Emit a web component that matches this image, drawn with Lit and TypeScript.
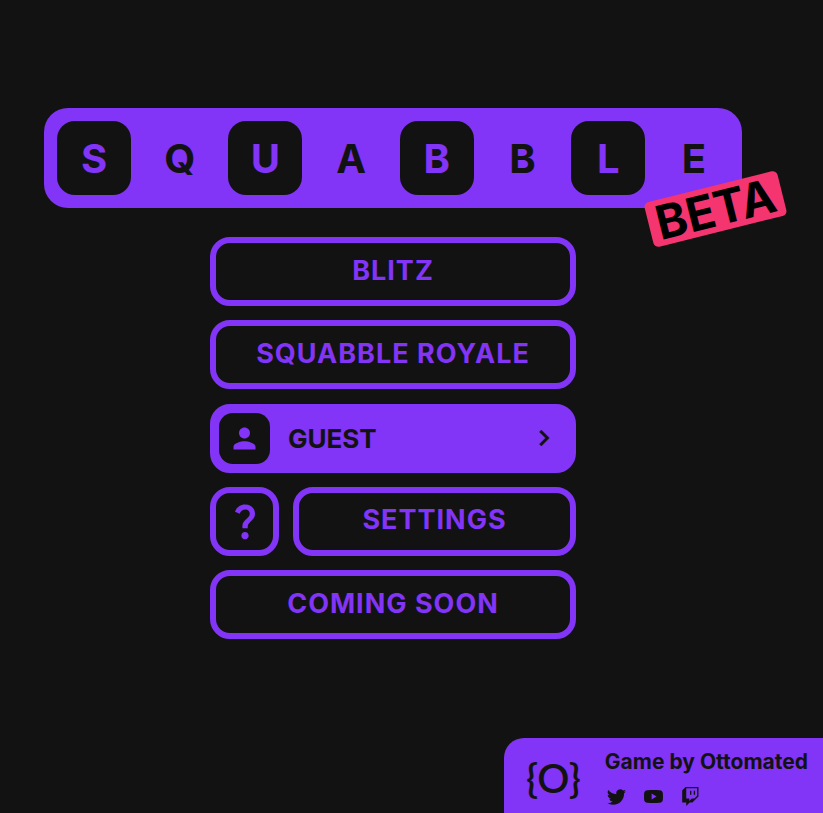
import { LitElement, html, css, svg } from "lit";
import { customElement, property } from "lit/decorators.js";

const icons = {
  person: svg`<path d="M12 12c2.21 0 4-1.79 4-4s-1.79-4-4-4-4 1.79-4 4 1.79 4 4 4zm0 2c-2.67 0-8 1.34-8 4v2h16v-2c0-2.66-5.33-4-8-4z"/>`,
  chevron: svg`<path d="M10 6 8.59 7.41 13.17 12l-4.58 4.59L10 18l6-6z" stroke="currentColor" stroke-width="0.3"/>`,
  help: svg`<path d="M11.07 12.85c.77-1.39 2.25-2.21 3.11-3.44.91-1.29.4-3.7-2.18-3.7-1.69 0-2.52 1.28-2.87 2.34L6.54 6.96C7.25 4.83 9.18 3 11.99 3c2.35 0 3.96 1.07 4.78 2.41.7 1.15 1.11 3.3.03 4.9-1.2 1.77-2.35 2.31-2.97 3.45-.25.46-.35.76-.35 2.24h-2.89c-.01-.78-.13-2.05.48-3.15zM14 20c0 1.1-.9 2-2 2s-2-.9-2-2 .9-2 2-2 2 .9 2 2z"/>`,
  twitter: svg`<path d="M5.026 15c6.038 0 9.341-5.003 9.341-9.334 0-.14 0-.282-.006-.422A6.685 6.685 0 0 0 16 3.542a6.658 6.658 0 0 1-1.889.518 3.301 3.301 0 0 0 1.447-1.817 6.533 6.533 0 0 1-2.087.793A3.286 3.286 0 0 0 7.875 6.03a9.325 9.325 0 0 1-6.767-3.429 3.289 3.289 0 0 0 1.018 4.382A3.323 3.323 0 0 1 .64 6.575v.045a3.288 3.288 0 0 0 2.632 3.218 3.203 3.203 0 0 1-.865.115 3.23 3.23 0 0 1-.614-.057 3.283 3.283 0 0 0 3.067 2.277A6.588 6.588 0 0 1 .78 13.58a6.32 6.32 0 0 1-.78-.045A9.344 9.344 0 0 0 5.026 15z"/>`,
  youtube: svg`<path fill-rule="evenodd" d="M3 2.700C6 2.400 10 2.400 13 2.700 15 2.900 15.800 3.800 15.900 5.500 16 7.200 16 8.800 15.900 10.500 15.800 12.200 15 13.100 13 13.300 10 13.600 6 13.600 3 13.300 1 13.100.2 12.200.1 10.500 0 8.800 0 7.200.1 5.500.2 3.800 1 2.900 3 2.700zM6.400 5.500v5L10.600 8z"/>`,
  twitch: svg`<path d="M3.857 0 1 2.857v10.286h3.429V16l2.857-2.857H9.57L14.714 8V0H3.857zm9.714 7.429-2.285 2.285H9l-2 2v-2H4.429V1.143h9.142v6.286z"/><path d="M11.857 3.143h-1.143V6.57h1.143V3.143zm-3.143 0H7.571V6.57h1.143V3.143z"/>`,
};

@customElement("squabble-logo")
class SquabbleLogo extends LitElement {
  @property() word = "SQUABBLE";

  static styles = css`
    :host {
      display: block;
      position: relative;
    }
    .bar {
      display: flex;
      justify-content: space-between;
      margin: 0;
      padding: 13px 11px 13px 13px;
      border-radius: 24px;
      background: var(--accent);
      color: var(--ground);
      font-size: 40px;
      font-weight: 700;
    }
    .tile {
      display: grid;
      place-items: center;
      width: 74px;
      height: 74px;
      border-radius: 18px;
    }
    .tile:nth-child(odd) {
      background: var(--ground);
      color: var(--accent);
    }
    .badge {
      position: absolute;
      right: -42px;
      top: 78px;
      width: 137px;
      height: 46px;
      border-radius: 5px;
      background: #f4356f;
      color: #000;
      font-size: 47px;
      font-weight: 700;
      line-height: 46px;
      text-align: center;
      transform: rotate(-14deg);
    }
  `;

  render() {
    return html`
      <h1 class="bar">
        ${[...this.word].map((c) => html`<span class="tile">${c}</span>`)}
      </h1>
      <span class="badge">BETA</span>
    `;
  }
}

@customElement("app-root")
class AppRoot extends LitElement {
  static styles = css`
    :host {
      --accent: #8234f7;
      --ground: #121212;
      display: flex;
      flex-direction: column;
      min-height: 100vh;
      background: var(--ground);
      color: var(--accent);
      font-family: Inter, "Open Sans", sans-serif;
    }
    main {
      flex: 1;
      padding: 108px 81px 32px 44px;
    }
    .menu {
      display: flex;
      flex-direction: column;
      justify-content: space-between;
      max-width: 366px;
      min-height: 402px;
      margin: 29px auto 0;
    }
    .row {
      display: flex;
      gap: 14px;
    }
    button {
      box-sizing: border-box;
      height: 69px;
      margin: 0;
      padding: 0 0 3px;
      border: 6px solid var(--accent);
      border-radius: 20px;
      background: var(--ground);
      color: var(--accent);
      font: inherit;
      font-size: 27px;
      font-weight: 700;
      letter-spacing: 1px;
      cursor: pointer;
    }
    svg {
      display: block;
      fill: currentColor;
    }
    .wide {
      flex: 1;
    }
    .square {
      display: grid;
      place-items: center;
      width: 69px;
      padding: 0;
    }
    .guest {
      display: flex;
      align-items: center;
      padding: 0 10px 0 3px;
      background: var(--accent);
      color: var(--ground);
      font-size: 26px;
      letter-spacing: normal;
    }
    .avatar {
      display: grid;
      place-items: center;
      width: 51px;
      height: 51px;
      margin-right: 18px;
      border-radius: 14px;
      background: var(--ground);
      color: var(--accent);
    }
    .name {
      flex: 1;
      text-align: left;
    }
    footer {
      display: flex;
      gap: 24px;
      box-sizing: border-box;
      height: 75px;
      margin-left: auto;
      padding: 11px 15px 0 22px;
      border-radius: 20px 0 0 0;
      background: var(--accent);
      color: var(--ground);
    }
    .mark {
      font-family: Lato, sans-serif;
      font-size: 40px;
      font-weight: 600;
      line-height: 58px;
    }
    .credit {
      margin: 0 0 12px;
      font-size: 21px;
      font-weight: 700;
      line-height: 26px;
    }
    .links {
      display: flex;
      gap: 18px;
      padding-left: 2px;
    }
    a {
      color: inherit;
    }
  `;

  private icon(name: keyof typeof icons, size: number, box = 24) {
    return html`<svg width=${size} height=${size} viewBox="0 0 ${box} ${box}" aria-hidden="true">${icons[name]}</svg>`;
  }

  render() {
    return html`
      <main>
        <squabble-logo></squabble-logo>
        <nav class="menu">
          <div class="row"><button class="wide">BLITZ</button></div>
          <div class="row"><button class="wide">SQUABBLE ROYALE</button></div>
          <div class="row">
            <button class="wide guest">
              <span class="avatar">${this.icon("person", 33)}</span>
              <span class="name">GUEST</span>
              ${this.icon("chevron", 32)}
            </button>
          </div>
          <div class="row">
            <button class="square" aria-label="Help">${this.icon("help", 44)}</button>
            <button class="wide">SETTINGS</button>
          </div>
          <div class="row"><button class="wide">COMING SOON</button></div>
        </nav>
      </main>
      <footer>
        <span class="mark">{O}</span>
        <div>
          <p class="credit">Game by Ottomated</p>
          <div class="links">
            <a href="#twitter" aria-label="Twitter">${this.icon("twitter", 19, 16)}</a>
            <a href="#youtube" aria-label="YouTube">${this.icon("youtube", 19, 16)}</a>
            <a href="#twitch" aria-label="Twitch">${this.icon("twitch", 19, 16)}</a>
          </div>
        </div>
      </footer>
    `;
  }
}
